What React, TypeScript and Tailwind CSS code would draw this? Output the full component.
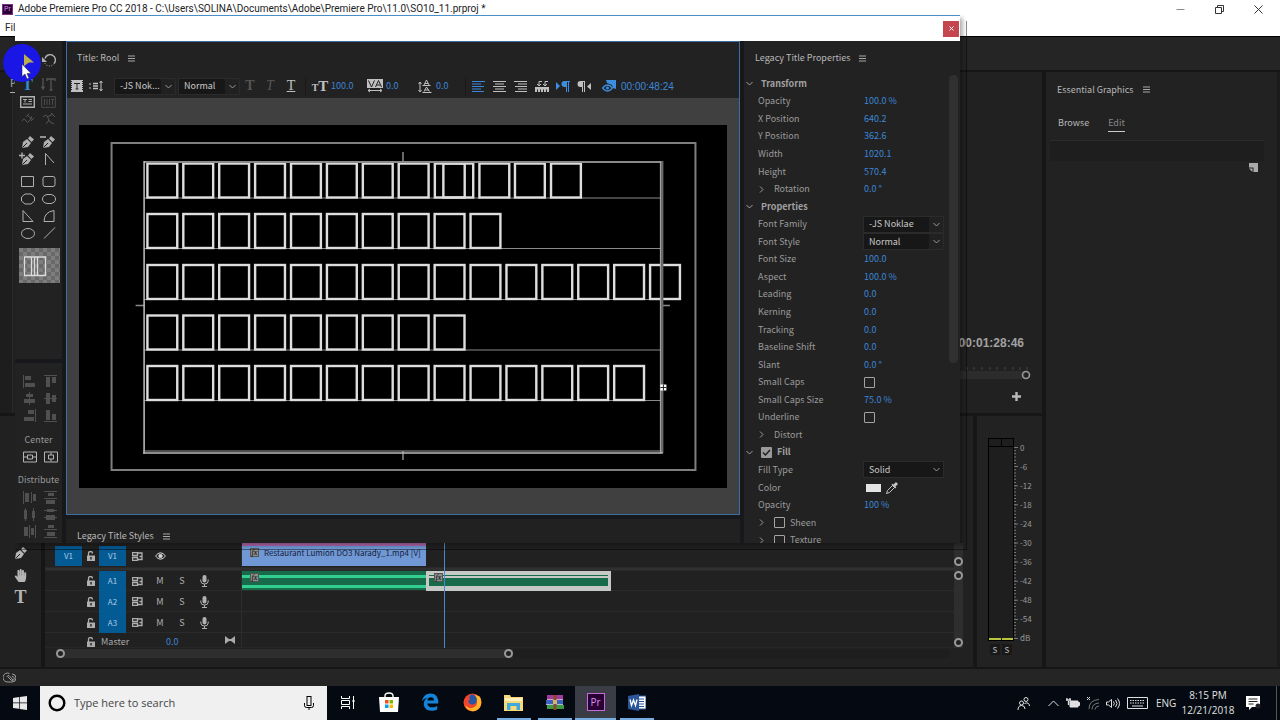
import type { ReactNode } from 'react';
import { FaHandPaper } from 'react-icons/fa';

/* ---------- shared bits ---------- */

type IconProps = { size?: string; box?: string; children: ReactNode; className?: string };

function Icon({ size = 'w-4 h-4', box = '0 0 16 16', children, className = '' }: IconProps) {
  return (
    <svg viewBox={box} className={`${size} shrink-0 ${className}`} fill="none" stroke="currentColor" aria-hidden="true">
      {children}
    </svg>
  );
}

function IconButton({ label, className = '', children }: { label: string; className?: string; children: ReactNode }) {
  return (
    <button type="button" aria-label={label} className={`flex shrink-0 items-center justify-center ${className}`}>
      {children}
    </button>
  );
}

function MenuLines({ label }: { label: string }) {
  return (
    <IconButton label={label} className="text-[#a8a8a8]">
      <Icon size="w-[7px] h-[7px]" box="0 0 7 7">
        <path d="M0 1h7M0 3.500h7M0 6h7" />
      </Icon>
    </IconButton>
  );
}

function Chevron({ className = '' }: { className?: string }) {
  return (
    <Icon size="w-[7px] h-[7px]" box="0 0 7 7" className={className}>
      <path d="M.5 2l3 3 3-3" />
    </Icon>
  );
}

function Select({ label, value, className = '', split = true }: { label: string; value: string; className?: string; split?: boolean }) {
  return (
    <span className={`relative flex h-[17px] items-stretch border border-[#2b2b2b] bg-[#171717] ${className}`}>
      <select aria-label={label} defaultValue={value} className="w-full appearance-none bg-transparent pl-[5px] text-[9px] leading-[14px] text-[#c8c8c8] outline-none">
        <option>{value}</option>
      </select>
      <span className={`pointer-events-none absolute inset-y-0 right-0 flex w-[14px] items-center justify-center text-[#999] ${split ? 'bg-[#212121]' : ''}`}>
        <Chevron />
      </span>
    </span>
  );
}

/* ---------- main window ---------- */

function TitleBar() {
  return (
    <header className="h-9 bg-white font-['Roboto',sans-serif] text-[#222]">
      <div className="flex h-[18px] items-center">
        <span className="ml-[2px] flex h-[11px] w-[11px] items-center justify-center border border-[#7a2f86] bg-[#2a0034] text-[7px] leading-none text-[#d88be8]">Pr</span>
        <h1 className="ml-[5px] text-[10px] leading-[18px] whitespace-nowrap">
          Adobe Premiere Pro CC 2018 - C:\Users\SOLINA\Documents\Adobe\Premiere Pro\11.0\SO10_11.prproj *
        </h1>
        <div className="ml-auto flex text-[#333]">
          <IconButton label="Minimize" className="w-[39px]">
            <Icon size="w-[9px] h-[9px]" box="0 0 9 9"><path d="M.5 4.500h8" stroke="#888" /></Icon>
          </IconButton>
          <IconButton label="Restore" className="w-[39px]">
            <Icon size="w-[9px] h-[9px]" box="0 0 9 9"><path d="M.5 2.500h6v6h-6zM2.500 2.500v-2h6v6h-2" /></Icon>
          </IconButton>
          <IconButton label="Close" className="mr-[2px] w-[39px]">
            <Icon size="w-[9px] h-[9px]" box="0 0 9 9"><path d="M.5.500l8 8M8.500.5l-8 8" /></Icon>
          </IconButton>
        </div>
      </div>
      <nav className="flex h-[18px] items-center pl-[5px] text-[10px]">
        <button type="button">File</button>
      </nav>
    </header>
  );
}

function ProgramMonitor() {
  return (
    <section className="relative flex h-[341px] bg-[#212121]">
      <div className="w-[13px] border-r border-[#2b2b2b] bg-[#1d1d1d] pt-[4px] pl-[10px] text-[10px] leading-[14px] text-[#aaa]">
        <span className="block w-[5px] overflow-hidden border-b border-[#aaa] pb-[2px]">P</span>
      </div>
      <div className="flex flex-1 flex-col items-end justify-end">
        <time className="mr-[18px] font-['Liberation_Sans',sans-serif] text-[12px] leading-4 font-bold text-[#a2a2a2]">00:01:28:46</time>
        <svg className="mt-[14px] mr-[9px] h-[16px] w-[90px]" viewBox="0 0 90 16" fill="none" aria-hidden="true">
          <rect x="0" y="6" width="82" height="8" fill="#2c2c2c" />
          <path d="M4 2v3M12 0v5M20 2v3M27 2v3M35 2v3M43 2v3M50 2v3M58 2v3M66 2v3M73 2v3M80 2v3" transform="translate(4)" stroke="#444" />
          <circle cx="83" cy="10" r="3.5" stroke="#9a9a9a" strokeWidth="1.6" />
        </svg>
        <IconButton label="Button editor" className="mt-[10px] mr-[20px] mb-[11px] text-[#b8b8b8]">
          <Icon size="w-[11px] h-[11px]" box="0 0 11 11"><path d="M5.500 1v9M1 5.500h9" strokeWidth="2.400" /></Icon>
        </IconButton>
      </div>
    </section>
  );
}

function EssentialGraphics() {
  return (
    <aside className="w-[234px] shrink-0 border-r-[3px] border-[#1b1b1b] bg-[#222] text-[9px]">
      <div className="flex items-center gap-[9px] pt-[10px] pl-[11px] leading-[15px] text-[#b8b8b8]">
        <h2>Essential Graphics</h2>
        <MenuLines label="Essential Graphics menu" />
      </div>
      <div role="tablist" className="flex gap-[19px] pt-[18px] pl-[12px] leading-[15px]">
        <button type="button" role="tab" aria-selected="false" className="self-start text-[#b8b8b8]">Browse</button>
        <button type="button" role="tab" aria-selected="true" className="border-b border-[#ccc] pb-px text-[#868686]">Edit</button>
      </div>
      <div className="mt-[8px] mr-[13px] ml-[4px] h-[21px] border-t border-[#2d2d2d] bg-[#1e1e1e]" />
      <div className="flex justify-end pt-[2px] pr-[19px] text-[#ababab]">
        <IconButton label="New layer">
          <Icon size="w-[9px] h-[9px]" box="0 0 9 9"><path d="M0 0h9v9H4.500V4.500H0z" fill="currentColor" stroke="none" /><path d="M0 5.500L3.500 9V5.500z" fill="currentColor" stroke="none" /></Icon>
        </IconButton>
      </div>
    </aside>
  );
}

function ToolsColumn() {
  return (
    <div className="flex w-[41px] shrink-0 flex-col items-center bg-[#212121] pt-[126px] text-[#b5b5b5]">
      <IconButton label="Pen tool" className="h-[22px] w-full">
        <PenNib />
      </IconButton>
      <IconButton label="Hand tool" className="h-[22px] w-full">
        <FaHandPaper className="h-[13px] w-[13px]" />
      </IconButton>
      <IconButton label="Type tool" className="h-[22px] w-full font-['Liberation_Serif',serif] text-[18px] leading-none font-bold">
        T
      </IconButton>
    </div>
  );
}

function Lock() {
  return (
    <Icon size="w-[8px] h-[10px]" box="0 0 8 10">
      <path d="M1.500 5V2.500a2 2 0 014 0" strokeWidth="1.300" />
      <path d="M0 4.500h8V10H0z" fill="currentColor" stroke="none" />
      <path d="M4 6v2.500" stroke="#222" strokeWidth="1.400" />
    </Icon>
  );
}

function SyncLock() {
  return (
    <Icon size="w-[11px] h-[9px]" box="0 0 11 9">
      <path d="M.5.500h5v3h-5zM.5 5.500h5v3h-5zM6 1h4v3M6 7.500h4v-3H7.500" strokeWidth="1.300" />
    </Icon>
  );
}

function Mic() {
  return (
    <Icon size="w-[9px] h-[12px]" box="0 0 9 12">
      <rect x="2.500" y="0" width="4" height="7.500" rx="2" fill="currentColor" stroke="none" />
      <path d="M.8 4.500v1.500a3.700 3 0 007.400 0V4.500M4.500 9v2.500M2 11.500h5" />
    </Icon>
  );
}

function Fx() {
  return <span className="flex h-[9px] w-[9px] items-center justify-center border border-[#555] bg-[#8e8e8e] font-['Liberation_Serif',serif] text-[8px] leading-none text-black italic">fx</span>;
}

function TrackHeader({ name, source, height }: { name: string; source?: string; height: string }) {
  const audio = name !== 'V1';
  return (
    <div className={`flex ${height} w-[197px] shrink-0 items-center border-r border-[#2d2d2d] text-[9px] text-[#b0b0b0]`}>
      <span className="flex w-[37px] self-stretch pl-[10px]">
        {source && <button type="button" className="flex-1 bg-[#045a93] text-[8px] text-[#a9cbe4]">{source}</button>}
      </span>
      <IconButton label={`Lock ${name}`} className="w-[17px]"><Lock /></IconButton>
      <button type="button" className="w-[27px] self-stretch bg-[#045a93] text-[8px] text-[#a9cbe4]">{name}</button>
      <IconButton label={`Sync lock ${name}`} className="w-[23px]"><SyncLock /></IconButton>
      {audio ? (
        <>
          <button type="button" className="w-[22px]">M</button>
          <button type="button" className="w-[22px]">S</button>
          <IconButton label={`Record ${name}`} className="w-[22px]"><Mic /></IconButton>
        </>
      ) : (
        <IconButton label="Toggle track output" className="w-[22px] text-[#d5d5d5]">
          <Icon size="w-[11px] h-[8px]" box="0 0 11 8"><path d="M.5 4Q5.500-2.500 10.500 4 5.500 10.500.5 4z" /><circle cx="5.500" cy="4" r="1.700" fill="currentColor" /></Icon>
        </IconButton>
      )}
    </div>
  );
}

function Knob() {
  return <span className="block h-[9px] w-[9px] shrink-0 rounded-full border-2 border-[#999] bg-[#222]" />;
}

function Timeline() {
  return (
    <section className="relative flex min-w-0 flex-1 flex-col bg-[#212121] pt-[127px]">
      <div className="flex">
        <div className="min-w-0 flex-1">
          <div className="flex h-[24px] items-end pb-px">
            <TrackHeader name="V1" source="V1" height="h-[20px]" />
            <div className="w-[184px] border-t-[3px] border-[#b568b0]">
              <div className="flex h-[20px] items-start gap-[5px] bg-[#6f98d4] pt-[2px] pl-[8px] text-[8px] leading-[10px] whitespace-nowrap text-[#16203a]">
                <Fx />
                <span>Restaurant Lumion DO3 Narady_1.mp4 [V]</span>
              </div>
            </div>
          </div>
          <div className="h-[4px] border-y border-[#292929] bg-[#303030]" />
          <div className="flex h-[20px] border-b border-[#2b2b2b]">
            <TrackHeader name="A1" height="h-[20px]" />
            <div className="flex h-[19px] w-[184px] flex-col bg-[#186b4a]">
              <div className="mt-[4px] h-[3px] bg-[#33cf90]" />
              <div className="mt-[7px] h-[3px] bg-[#33cf90]" />
              <div className="absolute mt-[2px] ml-[8px]"><Fx /></div>
            </div>
            <div className="flex h-[20px] w-[185px] flex-col bg-[#c6c8c6] px-[3px] pt-[4px]">
              <div className="h-px bg-[#186b4a]" />
              <div className="mt-[2px] h-[8px] bg-[#186b4a]" />
              <div className="absolute -mt-[2px] ml-[5px]"><Fx /></div>
            </div>
          </div>
          <div className="flex h-[21px] border-b border-[#2b2b2b]"><TrackHeader name="A2" height="h-[21px]" /></div>
          <div className="flex h-[21px] border-b border-[#2b2b2b]"><TrackHeader name="A3" height="h-[21px]" /></div>
          <div className="flex h-[15px] border-b border-[#272727]">
            <div className="flex w-[197px] items-end border-r border-[#2d2d2d] pl-[42px] text-[9px] leading-[10px] text-[#aaa]">
              <Lock />
              <span className="ml-[6px] w-[65px]">Master</span>
              <button type="button" className="text-[#3c86d8]">0.0</button>
              <Icon size="w-[10px] h-[8px]" box="0 0 10 8" className="mr-[6px] mb-[3px] ml-auto"><path d="M0 0l4 3h2l4-3v8L6 5H4L0 8z" fill="currentColor" stroke="none" /></Icon>
            </div>
          </div>
        </div>
        <div className="mr-[10px] flex w-[9px] flex-col justify-between bg-[#2e2e2e] pt-[14px] pb-px">
          <div className="flex flex-col gap-[5px]"><Knob /><Knob /></div>
          <Knob />
        </div>
      </div>
      <div className="mt-[1px] mr-[23px] ml-[11px] flex h-[9px] items-center bg-[#1e1e1e]">
        <div className="flex w-[457px] items-center justify-between bg-[#2e2e2e]"><Knob /><Knob /></div>
      </div>
      <div className="absolute top-[127px] left-[399px] h-[105px] w-px bg-[#4a88cf]" />
    </section>
  );
}

const levels = ['0', '-6', '-12', '-18', '-24', '-30', '-36', '-42', '-48', '-54', 'dB'];

function AudioMeters() {
  return (
    <section aria-label="Audio meters" className="w-[65px] shrink-0 bg-[#222] pt-[22px] pl-[11px]">
      <div className="flex">
        <div className="flex h-[203px] w-[26px] flex-col border border-black bg-[#1e1e1e]">
          <div className="mx-auto h-[7px] w-px bg-black" />
          <div className="h-px bg-black" />
          <div className="mt-auto flex h-[2px] gap-px"><span className="flex-1 bg-[#b9c63a]" /><span className="flex-1 bg-[#b9c63a]" /></div>
        </div>
        <svg className="mt-[9px] h-[192px] w-[4px]" viewBox="0 0 4 192" stroke="#777" aria-hidden="true">
          <path d="M1 0v192" strokeWidth="2" strokeDasharray="1 2.180" />
          <path d="M2 0v192" strokeWidth="4" strokeDasharray="1 18.100" />
        </svg>
        <ol className="-mb-[4px] ml-[2px] grid h-[210px] auto-rows-fr items-center text-[8px] leading-[10px] text-[#999]">
          {levels.map((l) => <li key={l}>{l}</li>)}
        </ol>
      </div>
      <div className="flex gap-[2px] pl-[2px] text-[8px] leading-[10px] text-[#bbb]">
        <button type="button" aria-label="Solo left" className="h-[11px] w-[10px] bg-[#191919]">S</button>
        <button type="button" aria-label="Solo right" className="h-[11px] w-[10px] bg-[#191919]">S</button>
      </div>
    </section>
  );
}

/* ---------- titler window ---------- */

function PenNib({ sign }: { sign?: '+' | '-' }) {
  return (
    <Icon size="w-[18px] h-[14px]" box="0 0 18 14">
      <path d="M3 13l1-6 4-3 4 4-3 4z" fill="currentColor" stroke="none" />
      <path d="M9 3.500L11 1l4 3.500-2.500 2.500z" fill="currentColor" stroke="none" />
      <path d="M3.500 12.500L8 8" stroke="#222" />
      {sign === '+' && <path d="M0 3.500h6M3 .5v6" strokeWidth="1.400" />}
      {sign === '-' && <path d="M0 2h6" strokeWidth="1.600" />}
    </Icon>
  );
}

function Glyph({ d }: { d: string }) {
  return <Icon size="w-[14px] h-[14px]" box="0 0 14 14"><path d={d} /></Icon>;
}

function TitleTools() {
  return (
    <section className="h-[318px] bg-[#222] pt-[11px] pl-[2px] text-[#b0b0b0]">
      <div className="grid w-[42px] grid-cols-2 gap-y-[6px]">
        <IconButton label="Selection tool" className="h-[17px] text-[#b9ad3a]">
          <Icon size="w-[12px] h-[12px]" box="0 0 12 12"><path d="M2 0l9 8H6l-4 3z" fill="currentColor" stroke="none" /></Icon>
        </IconButton>
        <IconButton label="Rotation tool" className="h-[17px]">
          <Icon size="w-[14px] h-[14px]" box="0 0 14 14"><path d="M3 4.500a5.300 5.300 0 119 5" strokeWidth="1.400" /><path d="M12 9.500a5.300 5.300 0 01-9.500-1" strokeDasharray="1 1.500" /><path d="M0 3v5h5z" fill="currentColor" stroke="none" /></Icon>
        </IconButton>
      </div>
      <div className="mt-[7px] grid w-[42px] auto-rows-[17px] grid-cols-2">
        <IconButton label="Type tool" className="font-['Liberation_Serif',serif] text-[16px] leading-none font-bold text-[#3489d6]">T</IconButton>
        <IconButton label="Vertical type tool" className="text-[#555]">
          <Icon size="w-[15px] h-[13px]" box="0 0 15 13"><path d="M2 0v10M.5 8.500L2 11l1.500-2.500M6 3V1h8v2M10 1v11M8.500 12h3" strokeWidth="1.300" /></Icon>
        </IconButton>
        <IconButton label="Area type tool">
          <Icon size="w-[15px] h-[12px]" box="0 0 15 12"><path d="M.7.700h13.600v10.600H.7z" strokeWidth="1.400" /><path d="M3 3.500h4M5 3.500v3M8.500 3.500H12M8.500 5.500H12M3 8h9" /></Icon>
        </IconButton>
        <IconButton label="Vertical area type tool" className="text-[#4c4c4c]">
          <Icon size="w-[15px] h-[12px]" box="0 0 15 12"><path d="M.7.700h13.600v10.600H.7z" /><path d="M3.500 3v6M6 3v6M8.500 3v6M10 3.500h3M11.500 3.500V9" /></Icon>
        </IconButton>
        <IconButton label="Path type tool" className="text-[#555]"><Glyph d="M1 9q2-4 4 0t6-5M6 3l6 5M10 9l3-3M8 1.500L5 5" /></IconButton>
        <IconButton label="Vertical path type tool" className="text-[#555]"><Glyph d="M1 5q4-4 5 1t6 6M5 5l6-3M9 1l4 4M7 8l-3 4" /></IconButton>
      </div>
      <div className="mt-[6px] grid w-[42px] auto-rows-[17px] grid-cols-2">
        <IconButton label="Pen tool"><PenNib /></IconButton>
        <IconButton label="Delete anchor point tool"><PenNib sign="-" /></IconButton>
        <IconButton label="Add anchor point tool"><PenNib sign="+" /></IconButton>
        <IconButton label="Convert anchor point tool"><Glyph d="M3.500 13V1.500L12 11" /></IconButton>
      </div>
      <div className="mt-[6px] grid w-[42px] auto-rows-[17px] grid-cols-2">
        <IconButton label="Rectangle tool"><Glyph d="M.5 1.500h12v10H.5z" /></IconButton>
        <IconButton label="Rounded corner rectangle tool"><Glyph d="M3 1.500h8q2 0 2 2v6q0 2-2 2H3q-2 0-2-2v-6q0-2 2-2z" /></IconButton>
        <IconButton label="Clipped corner rectangle tool"><Glyph d="M4 2h6l3.500 3v4L10 12H4L.5 9V5z" /></IconButton>
        <IconButton label="Rounded rectangle tool"><Glyph d="M5 2.500h4q4.500 1 4.500 4.500T9 11.500H5Q.5 10.500.5 7T5 2.500z" /></IconButton>
        <IconButton label="Wedge tool"><Glyph d="M2 1.500v11h10z" /></IconButton>
        <IconButton label="Arc tool"><Glyph d="M12 1.500v11H2Q2 3 12 1.500z" /></IconButton>
        <IconButton label="Ellipse tool"><Glyph d="M.5 7.500a6.500 5 0 1113 0 6.500 5 0 11-13 0z" /></IconButton>
        <IconButton label="Line tool"><Glyph d="M2 12.500L13 1.500" /></IconButton>
      </div>
      <svg viewBox="0 0 41 35" className="mt-[7px] ml-[2px] h-[35px] w-[41px]" aria-hidden="true">
        <defs>
          <pattern id="checker" width="8" height="8" patternUnits="userSpaceOnUse">
            <rect width="8" height="8" fill="#696969" />
            <path d="M0 0h4v4H0zM4 4h4v4H4z" fill="#7d7d7d" />
          </pattern>
        </defs>
        <rect width="41" height="35" fill="url(#checker)" />
        <path d="M5.500 9h10v18.500h-10zM12.500 9H26.500v18.500h-14zM18.500 9v18.500" fill="none" stroke="#dcdcdc" strokeWidth="1.300" />
      </svg>
    </section>
  );
}

const alignShapes = [
  'M0 0h1v13H0zM2 1h6v4H2zM2 8h10v4H2z',
  'M0 0h13v1H0zM2 2h4v10H2zM8 2h4v6H8z',
  'M6 0h1v13H6zM3 2h7v3H3zM1 7h11v4H1z',
  'M0 6h13v1H0zM2 1h4v11H2zM8 3h4v7H8z',
  'M12 0h1v13h-1zM5 1h6v4H5zM1 8h10v4H1z',
  'M0 12h13v1H0zM2 1h4v10H2zM8 5h4v6H8z',
];
const distributeShapes = [
  'M0 0h1v13H0zM2 2h4v9H2zM8 1h1v11H8zM10 3h3v7h-3z',
  'M0 0h13v1H0zM4 2h6v3H4zM0 7h13v1H0zM2 9h9v4H2z',
  'M2 0h1v13H2zM1 2h3v9H1zM10 0h1v13h-1zM9 3h3v7H9z',
  'M0 2h13v1H0zM3 1h7v3H3zM0 9h13v1H0zM2 7h9v5H2z',
  'M1 2h4v9H1zM6 0h1v13H6zM8 3h3v7H8zM12 0h1v13h-1z',
  'M4 0h6v3H4zM0 4h13v1H0zM3 7h8v4H3zM0 12h13v1H0z',
];

function ShapeGrid({ shapes, label }: { shapes: string[]; label: string }) {
  return (
    <div className="ml-[4px] grid w-[42px] auto-rows-[17px] grid-cols-2 text-[#505050]">
      {shapes.map((d, i) => (
        <IconButton key={d} label={`${label} ${i + 1}`}>
          <Icon size="w-[13px] h-[13px]" box="0 0 13 13"><path d={d} fill="currentColor" stroke="none" /></Icon>
        </IconButton>
      ))}
    </div>
  );
}

function AlignPanel() {
  return (
    <section className="mt-[4px] flex-1 overflow-hidden bg-[#222] pt-[10px] text-[9px] leading-[14px] text-[#989898]">
      <ShapeGrid shapes={alignShapes} label="Align" />
      <h3 className="mt-[9px] text-center">Center</h3>
      <div className="mt-[1px] ml-[4px] grid h-[17px] w-[42px] grid-cols-2 text-[#b5b5b5]">
        <IconButton label="Center vertically"><Glyph d="M.5 2h13v10H.5zM4.500 5h5v4h-5zM1 7h3.500M9.500 7H13" /></IconButton>
        <IconButton label="Center horizontally"><Glyph d="M.5 2h13v10H.5zM4.500 5h5v4h-5zM7 2.500V5M7 9v2.500" /></IconButton>
      </div>
      <h3 className="mt-[8px] text-center">Distribute</h3>
      <div className="mt-[2px]"><ShapeGrid shapes={distributeShapes} label="Distribute" /></div>
    </section>
  );
}

function ToolValue({ label, value, icon }: { label: string; value: string; icon: ReactNode }) {
  return (
    <span className="flex items-center">
      <span className="flex w-[22px] justify-center">{icon}</span>
      <button type="button" aria-label={label} className="text-[#3c86d8]">{value}</button>
    </span>
  );
}

function Pilcrow({ flip = false }: { flip?: boolean }) {
  return flip ? (
    <Icon size="w-[14px] h-[11px]" box="0 0 14 11"><path d="M3.500 0H8v11H7V1H6v10H5V6H3.500a3 3 0 010-6zM14 2v7L10 5.500z" fill="currentColor" stroke="none" /></Icon>
  ) : (
    <Icon size="w-[14px] h-[11px]" box="0 0 14 11"><path d="M8.500 0H14v1h-1v10h-1V1h-1v10h-1V6H8.500a3 3 0 010-6zM0 1v8l4-4z" fill="currentColor" stroke="none" /></Icon>
  );
}

function TitleToolbar() {
  return (
    <div className="flex h-[24px] items-center text-[9px] text-[#c0c0c0]">
      <IconButton label="New title" className="w-[19px]">
        <Icon size="w-[12px] h-[12px]" box="0 0 12 12"><path d="M0 0h12v12H0z" fill="currentColor" stroke="none" /><path d="M3 3.500h6M6 3.500V9M4.500 9h3" stroke="#222" /><path d="M.5 1v10M11.500 1v10" stroke="#222" strokeDasharray="1 1" /></Icon>
      </IconButton>
      <IconButton label="Roll and crawl options" className="mr-[8px] w-[20px]">
        <Icon size="w-[14px] h-[12px]" box="0 0 14 12"><path d="M4 3.500h5M4 6h5M4 8.500h5" strokeWidth="1.500" /><path d="M0 4h2M0 8h2M12 2v8M10.500 3L12 1l1.500 2M10.500 9L12 11l1.500-2" /></Icon>
      </IconButton>
      <Select label="Font family" value="-JS Nok..." className="mr-[2px] w-[62px]" />
      <Select label="Font style" value="Normal" className="w-[62px]" />
      <span className="flex font-['Liberation_Serif',serif] text-[14px] leading-none">
        <button type="button" aria-label="Bold" className="w-[20px] font-bold text-[#555]">T</button>
        <button type="button" aria-label="Italic" className="w-[20px] text-[#555] italic">T</button>
        <button type="button" aria-label="Underline" className="w-[22px] underline">T</button>
      </span>
      <span className="mx-[3px] h-[18px] w-px bg-[#191919]" />
      <span className="flex w-[55px]">
        <ToolValue label="Size" value="100.0" icon={<span className="font-['Liberation_Serif',serif] text-[15px] leading-none font-bold"><span className="text-[10px]">T</span>T</span>} />
      </span>
      <span className="flex w-[50px]">
        <ToolValue label="Kerning" value="0.0" icon={
          <Icon size="w-[16px] h-[14px]" box="0 0 16 14"><path d="M0 0h16v9H0z" fill="currentColor" stroke="none" /><path d="M1.500 1.500L4.500 8l3-6.500M8.500 8l3-6.500L14.500 8M9.500 6h4" stroke="#222" /><path d="M1 11.500h14M3 10l-2 1.500L3 13M13 10l2 1.500L13 13" /></Icon>} />
      </span>
      <span className="flex w-[51px]">
        <ToolValue label="Leading" value="0.0" icon={
          <Icon size="w-[14px] h-[14px]" box="0 0 14 14"><path d="M2 3v9M.5 5L2 3l1.500 2M.5 11L2 13l1.500-2M6 6l2.500-5L11 6M7 4.500h3M4.500 6.500h8M6 12.500L8.500 8l3 4.500M7 11h4M4.500 13.500h9" /></Icon>} />
      </span>
      <span className="mr-[2px] h-[18px] w-px bg-[#191919]" />
      <IconButton label="Left" className="w-[21px] text-[#3c86d8]"><Icon size="w-[13px] h-[11px]" box="0 0 13 11"><path d="M0 .5h13M0 3h9M0 5.500h12M0 8h9M0 10.500h12" /></Icon></IconButton>
      <IconButton label="Center" className="w-[21px]"><Icon size="w-[13px] h-[11px]" box="0 0 13 11"><path d="M0 .5h13M2 3h9M0 5.500h13M2 8h9M0 10.500h13" /></Icon></IconButton>
      <IconButton label="Right" className="w-[21px]"><Icon size="w-[13px] h-[11px]" box="0 0 13 11"><path d="M0 .5h13M4 3h9M1 5.500h12M4 8h9M1 10.500h12" /></Icon></IconButton>
      <IconButton label="Tab stops" className="w-[21px]"><Icon size="w-[14px] h-[12px]" box="0 0 14 12"><path d="M0 7h14v5H0z" fill="currentColor" stroke="none" /><path d="M2.500 12V9.500M5.500 12V9.500M8.500 12V9.500M11.500 12V9.500" stroke="#222" /><path d="M4 6V1.500h3M2 4l2 2 2-2M10 6V1.500h3M8 4l2 2 2-2" /></Icon></IconButton>
      <IconButton label="Left to right" className="w-[21px] text-[#3c8fe0]"><Pilcrow /></IconButton>
      <IconButton label="Right to left" className="w-[21px]"><Pilcrow flip /></IconButton>
      <IconButton label="Show background video" className="ml-[4px] w-[21px] text-[#3c8fe0]">
        <Icon size="w-[14px] h-[12px]" box="0 0 14 12"><path d="M4 0h10v9l-3-1-1-3-5-2z" fill="currentColor" stroke="none" /><path d="M.5 8q5-6 10 0-5 6-10 0z" strokeWidth="1.300" /><circle cx="5.500" cy="8" r="1.500" fill="currentColor" stroke="none" /></Icon>
      </IconButton>
      <button type="button" aria-label="Background video timecode" className="ml-[2px] font-['Liberation_Sans',sans-serif] text-[10px] text-[#3c86d8]">00:00:48:24</button>
    </div>
  );
}

const pitch = 35.85;
const rows = [
  { y: 38.5, xs: [0, 1, 2, 3, 4, 5, 6, 7].map((i) => i * pitch).concat([287, 295.5, 331.5, 367, 403]) },
  { y: 89, xs: Array.from({ length: 10 }, (_, i) => i * pitch) },
  { y: 140, xs: Array.from({ length: 15 }, (_, i) => i * pitch) },
  { y: 190.5, xs: Array.from({ length: 9 }, (_, i) => i * pitch) },
  { y: 241, xs: Array.from({ length: 14 }, (_, i) => i * pitch) },
];

function TitleCanvas() {
  return (
    <div className="flex flex-1 bg-[#404040] pt-[27px] pr-[12px] pb-[26px] pl-[12px]">
      <svg viewBox="0 0 647 363" preserveAspectRatio="none" className="h-[363px] w-full bg-black" fill="none" role="img" aria-label="Title canvas">
        <rect x="32.500" y="18" width="583" height="327" stroke="#7e7e7e" strokeWidth="2" />
        <path d="M323.500 27v9M323.500 326v9M56.500 180.500h9M581 180.500h9" stroke="#8a8a8a" strokeWidth="1.500" />
        {rows.map((r) => (
          <path key={r.y} d={`M65 ${r.y + 34.5}h516`} stroke="#8a8a8a" />
        ))}
        {rows.map((r) => (
          <g key={r.y} stroke="#dedede" strokeWidth="2.400">
            {r.xs.map((x) => <rect key={x} x={68.3 + x} y={r.y} width="29.800" height="34" />)}
          </g>
        ))}
        <path d="M65 37h518" stroke="#8a8a8a" strokeWidth="2" />
        <path d="M582 36v292" stroke="#6a6a6a" strokeWidth="3" />
        <path d="M580.500 36v292" stroke="#aaa" />
        <path d="M65 36v292.500" stroke="#c4c4c4" strokeWidth="1.500" />
        <path d="M64 326h518" stroke="#999" />
        <path d="M64 328h519" stroke="#bbb" strokeWidth="1.400" />
        <rect x="580.500" y="259.500" width="6" height="6" fill="#fff" />
        <path d="M583.500 259.500v6M580.500 262.500h6" stroke="#222" />
      </svg>
    </div>
  );
}

type Row = { label: string; value?: string; kind?: 'group' | 'sub' | 'select' | 'check' | 'fill' | 'color' | 'subcheck'; split?: boolean };

const properties: Row[] = [
  { label: 'Transform', kind: 'group' },
  { label: 'Opacity', value: '100.0 %' },
  { label: 'X Position', value: '640.2' },
  { label: 'Y Position', value: '362.6' },
  { label: 'Width', value: '1020.1' },
  { label: 'Height', value: '570.4' },
  { label: 'Rotation', value: '0.0 °', kind: 'sub' },
  { label: 'Properties', kind: 'group' },
  { label: 'Font Family', value: '-JS Noklae', kind: 'select' },
  { label: 'Font Style', value: 'Normal', kind: 'select' },
  { label: 'Font Size', value: '100.0' },
  { label: 'Aspect', value: '100.0 %' },
  { label: 'Leading', value: '0.0' },
  { label: 'Kerning', value: '0.0' },
  { label: 'Tracking', value: '0.0' },
  { label: 'Baseline Shift', value: '0.0' },
  { label: 'Slant', value: '0.0 °' },
  { label: 'Small Caps', kind: 'check' },
  { label: 'Small Caps Size', value: '75.0 %' },
  { label: 'Underline', kind: 'check' },
  { label: 'Distort', kind: 'sub' },
  { label: 'Fill', kind: 'fill' },
  { label: 'Fill Type', value: 'Solid', kind: 'select', split: false },
  { label: 'Color', kind: 'color' },
  { label: 'Opacity', value: '100 %' },
  { label: 'Sheen', kind: 'subcheck' },
  { label: 'Texture', kind: 'subcheck' },
];

const boxClass = 'h-[11px] w-[11px] shrink-0 appearance-none rounded-[1px] border border-[#a4a4a4]';

function PropertyRow({ row }: { row: Row }) {
  const { label, value, kind } = row;
  if (kind === 'group') {
    return (
      <button type="button" className="flex items-center gap-[8px] pl-[2px] text-left font-bold text-[#a0a0a0]">
        <Chevron />{label}
      </button>
    );
  }
  if (kind === 'fill') {
    return (
      <label className="flex items-center pl-[2px] font-bold text-[#a0a0a0]">
        <Chevron className="mr-[8px]" />
        <span className="relative mr-[5px] flex">
          <input type="checkbox" defaultChecked className="h-[11px] w-[11px] appearance-none rounded-[1px] bg-[#9a9a9a]" />
          <Icon size="w-[11px] h-[11px]" box="0 0 11 11" className="pointer-events-none absolute inset-0"><path d="M2 5.500L4.500 8 9 3" stroke="#222" strokeWidth="1.500" /></Icon>
        </span>
        {label}
      </label>
    );
  }
  const indented = kind === 'sub' || kind === 'subcheck';
  return (
    <div className="flex items-center">
      <span className="flex w-[120px] items-center pl-[14px]">
        {indented && <Chevron className="mr-[9px] -rotate-90" />}
        {kind === 'subcheck' ? (
          <label className="flex items-center gap-[5px]"><input type="checkbox" className={boxClass} />{label}</label>
        ) : (
          label
        )}
      </span>
      {kind === 'select' && <Select label={label} value={value ?? ''} split={row.split} className="-ml-px w-[81px]" />}
      {kind === 'check' && <input type="checkbox" aria-label={label} className={boxClass} />}
      {kind === 'color' && (
        <>
          <button type="button" aria-label="Fill color" className="ml-[2px] h-[8px] w-[15px] bg-[#e4e4e4]" />
          <IconButton label="Eyedropper" className="ml-[5px] text-[#c4c4c4]">
            <Icon size="w-[12px] h-[12px]" box="0 0 12 12"><path d="M.5 11.500l1-3 5-5 2 2-5 5z" /><path d="M5.500 2.500l4 4 .8-1L9.500 4.500 12 2 10 0 7.500 2.500l-1-.8z" fill="currentColor" stroke="none" /></Icon>
          </IconButton>
        </>
      )}
      {value && kind !== 'select' && <button type="button" aria-label={`${label} value`} className="text-[#3c86d8]">{value}</button>}
    </div>
  );
}

function TitlePropertiesPanel() {
  return (
    <section className="flex w-[216px] shrink-0 flex-col overflow-hidden bg-[#222] text-[9px] leading-[14px] text-[#9a9a9a]">
      <div className="flex h-[34px] shrink-0 items-center gap-[9px] pl-[11px] text-[#b8b8b8]">
        <h2>Legacy Title Properties</h2>
        <MenuLines label="Properties menu" />
      </div>
      <div className="flex shrink-0">
        <div className="grid h-[474px] flex-1 auto-rows-fr">
          {properties.map((row, i) => <PropertyRow key={i} row={row} />)}
        </div>
        <div className="mr-[2px] h-[288px] w-[9px] rounded-full bg-[#303030]" />
      </div>
    </section>
  );
}

function TitlerWindow() {
  return (
    <div className="absolute top-[15px] right-[320px] left-[15px] flex h-[528px] flex-col border-t border-[#4a90c8] bg-[#17181c] shadow-[3px_3px_4px_rgba(0,0,0,0.3)]">
      <div className="pointer-events-none absolute top-[5px] -right-[7px] -bottom-[7px] left-0 border-r border-b border-black/45" />
      <div className="flex h-[25px] shrink-0 items-center justify-end bg-white pr-px">
        <button type="button" aria-label="Close title window" className="flex h-[16px] w-[16px] items-center justify-center bg-[#c4474f] text-white">
          <Icon size="w-[5px] h-[5px]" box="0 0 5 5"><path d="M.5.500l4 4M4.500.5l-4 4" /></Icon>
        </button>
      </div>
      <div className="flex min-h-0 flex-1">
        <div className="flex w-[47px] shrink-0 flex-col">
          <TitleTools />
          <AlignPanel />
        </div>
        <div className="mx-[4px] flex min-w-0 flex-1 flex-col">
          <section className="flex flex-col border border-[#3a6ea5] bg-[#222]">
            <div className="flex h-[32px] items-center gap-[9px] pl-[10px] text-[9px] leading-[14px] text-[#b8b8b8]">
              <h2>Title: Rool</h2>
              <MenuLines label="Title menu" />
            </div>
            <TitleToolbar />
            <TitleCanvas />
          </section>
          <section className="mt-[4px] flex flex-1 items-center gap-[9px] bg-[#212121] pt-[10px] pl-[11px] text-[9px] leading-[14px] text-[#b8b8b8]">
            <h2>Legacy Title Styles</h2>
            <MenuLines label="Styles menu" />
          </section>
        </div>
        <TitlePropertiesPanel />
      </div>
    </div>
  );
}

/* ---------- taskbar ---------- */

function TaskButton({ label, active = false, running = false, className = '', children }: { label: string; active?: boolean; running?: boolean; className?: string; children: ReactNode }) {
  return (
    <button type="button" aria-label={label} className={`flex w-[41px] flex-col items-center ${active ? 'bg-[#3a3d45]' : ''} ${className}`}>
      <span className="flex flex-1 items-center">{children}</span>
      <span className={`h-[2px] ${active ? 'w-full' : 'w-[34px]'} ${running ? 'bg-[#76acdf]' : ''}`} />
    </button>
  );
}

function Taskbar() {
  return (
    <footer className="flex h-[34px] items-stretch bg-[#050a12] font-['Open_Sans',sans-serif] text-white">
      <IconButton label="Start" className="w-[40px]">
        <Icon size="w-[14px] h-[14px]" box="0 0 14 14"><path d="M0 2l6-.9v5.500H0zM6.700 1L14 0v6.600H6.700zM0 7.300h6v5.500L0 12zM6.700 7.300H14V14l-7.300-1z" fill="#e8e8e8" stroke="none" /></Icon>
      </IconButton>
      <label className="flex w-[287px] items-center bg-[#f0f0f0] pr-[13px] pl-[8px] text-black">
        <Icon size="w-[18px] h-[18px]" box="0 0 18 18"><circle cx="9" cy="9" r="7.300" strokeWidth="2.400" /></Icon>
        <input type="search" aria-label="Search" placeholder="Type here to search" className="ml-[8px] min-w-0 flex-1 bg-transparent text-[11px] outline-none placeholder:text-[#444]" />
        <Icon size="w-[10px] h-[14px]" box="0 0 10 14"><rect x="3" y=".5" width="4" height="9" /><path d="M.5 7v2.500q0 2 2 2h5q2 0 2-2V7M5 11.500V14" /></Icon>
      </label>
      <TaskButton label="Task view">
        <Icon size="w-[14px] h-[13px]" box="0 0 14 13"><path d="M.5 0v2.500h8V0M.5 4.500h8v4h-8zM.5 13v-2.500h8V13M12.500 0v13" /><path d="M11.500 4h2v2h-2z" fill="currentColor" stroke="none" /></Icon>
      </TaskButton>
      <TaskButton label="Store">
        <Icon size="w-[20px] h-[20px]" box="0 0 20 20"><path d="M6 6V4q0-3 4-3t4 3v2" strokeWidth="1.400" /><path d="M0 5h20l-1 15H1z" fill="#fff" stroke="none" /><path d="M6 8h3.500v3.500H6z" fill="#f25022" stroke="none" /><path d="M10.500 8H14v3.500h-3.500z" fill="#7fba00" stroke="none" /><path d="M6 12.500h3.500V16H6z" fill="#00a4ef" stroke="none" /><path d="M10.500 12.500H14V16h-3.500z" fill="#ffb900" stroke="none" /></Icon>
      </TaskButton>
      <TaskButton label="Edge">
        <Icon size="w-[18px] h-[18px]" box="0 0 18 18"><path d="M1 8.200C1.800 3.500 5 .6 9.400.6c4.900 0 7.900 3.500 7.900 8.100v1.700H6.300c.2 2.700 2.400 3.900 5 3.900 1.900 0 3.400-.5 4.900-1.400v3.500c-1.600.9-3.500 1.400-5.700 1.400-4.800 0-7.700-2.800-7.700-7 0-2.700 1.500-4.800 3.800-6.100C4 5.200 2.200 6.500 1 8.200zm5.400-.7h6.500c0-2-1-3.200-3-3.200S6.700 5.500 6.400 7.500z" fill="#1583d8" stroke="none" /></Icon>
      </TaskButton>
      <TaskButton label="Firefox" className="ml-[2px]">
        <Icon size="w-[19px] h-[19px]" box="0 0 19 19"><circle cx="9.500" cy="9.500" r="9" fill="#f0452a" stroke="none" /><path d="M17 4c2 4 1.500 8-.5 11-2 2.500-5 3.500-8 3-4-.8-6-3.500-6-6 2 3 5 4 8 2.500 3-1.500 4-4 3.500-6.500 0-2-1-4-2.500-6C14 2 16 3 17 4z" fill="#ffb527" stroke="none" /><path d="M8 1.500c2.500-.5 4.500 1 5.500 3.500 1 3-.5 6-3.500 6.500-2.500.3-4.500-1-4.500-3 0-1.500 1-2 2-2L6 4.500z" fill="#2456a8" stroke="none" /></Icon>
      </TaskButton>
      <TaskButton label="File Explorer" running>
        <Icon size="w-[19px] h-[17px]" box="0 0 19 17"><path d="M0 1h6l1 2h12v14H0z" fill="#f6d978" stroke="none" /><path d="M1 4h17v3H1z" fill="#fff0b8" stroke="none" /><path d="M3 16V9h13v7h-3.500v-4h-6v4z" fill="#3fa9dc" stroke="none" /></Icon>
      </TaskButton>
      <TaskButton label="WinRAR" running>
        <Icon size="w-[18px] h-[15px]" box="0 0 18 15"><path d="M1 0h16v5H1z" fill="#a23a9c" stroke="none" /><path d="M0 5h17v5H0z" fill="#3c63c4" stroke="none" /><path d="M1 10h17v4H1z" fill="#3c9a45" stroke="none" /><path d="M1 4.500h16M0 9.500h17" stroke="#ddd" strokeWidth=".7" /><path d="M7.500 0h3v15h-3z" fill="#8a4a22" stroke="none" /><path d="M7 5h4v4H7z" fill="#d9b65a" stroke="none" /></Icon>
      </TaskButton>
      <TaskButton label="Premiere Pro" active running>
        <span className="flex h-[18px] w-[18px] items-center justify-center border border-[#c36bd6] bg-[#2a0034] text-[10px] leading-none text-[#dc8df0]">Pr</span>
      </TaskButton>
      <TaskButton label="Word" running>
        <Icon size="w-[18px] h-[17px]" box="0 0 18 17"><path d="M9 2h9v13H9z" fill="#fff" stroke="#2b579a" /><path d="M10 5h6M10 7.500h6M10 10h6M10 12.500h6" stroke="#2b579a" /><path d="M0 2l11-2v17L0 15z" fill="#2b579a" stroke="none" /><path d="M2 5.500l1.500 6L5.500 6l2 5.500L9 5.500" stroke="#fff" strokeWidth="1.300" /></Icon>
      </TaskButton>
      <div className="ml-auto flex items-center text-[#e0e0e0]">
        <IconButton label="People" className="w-[30px]"><Icon size="w-[13px] h-[13px]" box="0 0 13 13"><circle cx="4.500" cy="6" r="2" /><path d="M1 13q0-4.500 3.500-4.500T8 12" /><circle cx="9" cy="2.500" r="2" /><path d="M7.500 6.500q4.500-2 5 2.500" /></Icon></IconButton>
        <IconButton label="Show hidden icons" className="w-[30px]"><Icon size="w-[11px] h-[7px]" box="0 0 11 7"><path d="M.5 6l5-5 5 5" /></Icon></IconButton>
        <IconButton label="Battery" className="w-[10px]"><Icon size="w-[14px] h-[10px]" box="0 0 14 10"><path d="M4 3h8v6H4zM12 4.500h1.500v3H12z" fill="currentColor" /><path d="M0 2h5M1 0v2M4 0v2M2.500 3v4" strokeWidth="1.300" /></Icon></IconButton>
        <IconButton label="Network" className="w-[30px] text-[#777]"><Icon size="w-[13px] h-[13px]" box="0 0 13 13"><path d="M2 12Q2 3 12 2.500M5 12.500q0-6 7-6.500M8 12.500q0-3 4-3.500" /><path d="M0 0l3 3M3 0L0 3" stroke="#ddd" /></Icon></IconButton>
        <IconButton label="Volume" className="w-[10px]"><Icon size="w-[14px] h-[11px]" box="0 0 14 11"><path d="M.5 4h2L5.500 1.500v8L2.500 7h-2zM7.500 3.500q1.500 2 0 4M9.500 2q3 3.500 0 7M11.500.5q4 5 0 10" /></Icon></IconButton>
        <IconButton label="Touch keyboard" className="w-[38px]"><Icon size="w-[21px] h-[12px]" box="0 0 21 12"><path d="M.5.500h20v11H.5z" /><path d="M3 3.500h15M3 6h15" strokeDasharray="1.500 1" /><path d="M5 9h11" /></Icon></IconButton>
        <button type="button" className="w-[19px] text-[10px]">ENG</button>
        <time className="w-[66px] text-center text-[10px] leading-[15px]">8:15 PM<br />12/21/2018</time>
        <IconButton label="Notifications" className="mr-[11px] w-[24px]"><Icon size="w-[15px] h-[14px]" box="0 0 15 14"><path d="M0 0h14v11H6l-3 3v-3H0z" fill="#fff" stroke="none" /><path d="M2.500 3h9M2.500 5.500h9M2.500 8h5" stroke="#222" /><circle cx="12" cy="10" r="2.500" fill="#222" stroke="none" /></Icon></IconButton>
        <span className="mr-[3px] h-full w-px bg-[#555]" />
      </div>
    </footer>
  );
}

function Pointer() {
  return (
    <svg viewBox="0 0 40 40" className="pointer-events-none absolute top-[43px] left-[2px] h-[40px] w-[40px]" aria-hidden="true">
      <circle cx="20" cy="20" r="19" fill="#1a16e6" />
      <path d="M22 11l10 8.500h-5L22 23z" fill="#b9ad4e" />
      <path d="M20 21v12.500l3-2.500 2 5 2-1-2-4.500h4z" fill="#fff" stroke="#222" strokeWidth=".5" />
    </svg>
  );
}

export default function App() {
  return (
    <div className="relative flex min-h-screen flex-col overflow-hidden bg-[#161616] font-['Noto_Sans_CJK_SC','Noto_Sans',sans-serif]">
      <TitleBar />
      <div className="mb-[2px] h-[34px] border-t border-black bg-[#252525]" />
      <main className="mb-[2px] flex flex-1 gap-[4px]">
        <div className="flex min-w-0 flex-1 flex-col gap-[3px]">
          <ProgramMonitor />
          <div className="flex flex-1 gap-[4px]">
            <ToolsColumn />
            <Timeline />
            <AudioMeters />
          </div>
        </div>
        <EssentialGraphics />
      </main>
      <div className="flex h-[17px] items-center bg-[#252525] pl-[3px] text-[#999]">
        <Icon size="w-[13px] h-[11px]" box="0 0 13 11"><path d="M6.500 1.500A4.500 4.500 0 105 10h4a3.500 3.500 0 000-8" /><path d="M4 5a2 2 0 012-1.500l4 4.500M9 4.500a2 2 0 11-1 3.500L5 5" /></Icon>
      </div>
      <Taskbar />
      <TitlerWindow />
      <Pointer />
    </div>
  );
}
